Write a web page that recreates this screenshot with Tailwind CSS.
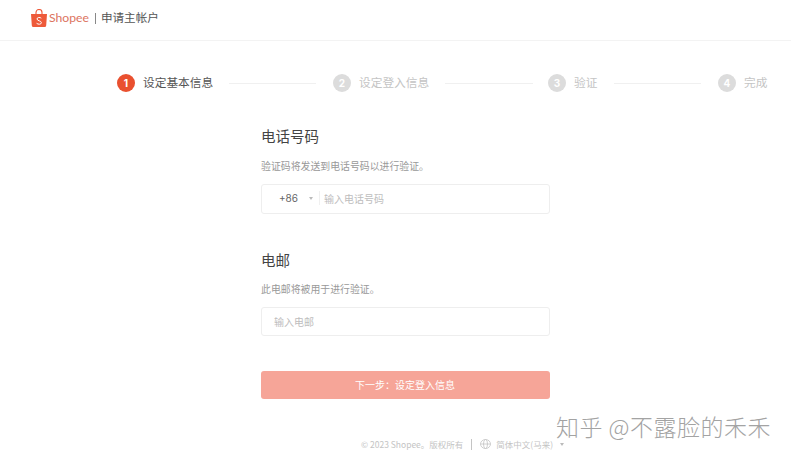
<!DOCTYPE html>
<html lang="zh-CN">
<head>
  <meta charset="UTF-8" />
  <title>Shopee 申请主帐户</title>
  <script src="https://cdn.jsdelivr.net/npm/@tailwindcss/browser@4"></script>
</head>
<body class="bg-white font-['Noto_Sans_CJK_SC','Noto_Sans',sans-serif] overflow-hidden">
  <div class="relative w-[791px] h-[461px] overflow-hidden">

    <!-- Header -->
    <header class="h-[41px] border-b border-[#f3f3f3] flex items-center pl-[31px] pb-[4px]">
      <svg class="w-[16px] h-[18px]" viewBox="0 0 16 18">
        <path d="M0 5h16l-.8 11.500q-.1 1.500-1.600 1.500H2.400q-1.500 0-1.600-1.500z" fill="#ee5a3a"/>
        <path d="M5 5V3.500a3 3 0 0 1 6 0V5" fill="none" stroke="#ee5a3a" stroke-width="1.100"/>
        <path d="M10.300 9.200C9.300 8.200 6 8 6 10c0 2 4.400 1.600 4.400 3.700 0 1.900-3.400 1.900-4.800.6" fill="none" stroke="#fff" stroke-width="1"/>
      </svg>
      <span class="ml-[2px] text-[12.200px] leading-none text-[#dc7460] font-['Lato',sans-serif]">Shopee</span>
      <span class="ml-[6px] w-px h-[11px] bg-[#888]"></span>
      <span class="ml-[5px] text-[11.600px] leading-none text-[#555]">申请主帐户</span>
    </header>

    <!-- Stepper -->
    <div class="h-[18px] mt-[33px] ml-[117px] w-[674px] flex items-center text-[11.700px] leading-none text-[#c4c4c4] whitespace-nowrap">
      <span class="shrink-0 w-[18px] h-[18px] rounded-full bg-[#e9502f] text-white text-[10px] font-bold flex items-center justify-center font-['Inter',sans-serif]">1</span>
      <span class="shrink-0 w-[70px] ml-[8px] pb-[2px] text-[#555]">设定基本信息</span>
      <span class="shrink-0 ml-[16px] w-[87px] h-px bg-[#f0f0f0]"></span>
      <span class="shrink-0 ml-[17px] w-[18px] h-[18px] rounded-full bg-[#dcdcdc] text-white text-[10px] font-bold flex items-center justify-center font-['Inter',sans-serif]">2</span>
      <span class="shrink-0 w-[70px] ml-[8px] pb-[2px]">设定登入信息</span>
      <span class="shrink-0 ml-[16px] w-[88px] h-px bg-[#f0f0f0]"></span>
      <span class="shrink-0 ml-[15px] w-[18px] h-[18px] rounded-full bg-[#dcdcdc] text-white text-[10px] font-bold flex items-center justify-center font-['Inter',sans-serif]">3</span>
      <span class="shrink-0 w-[24px] ml-[8px] pb-[2px]">验证</span>
      <span class="shrink-0 ml-[16px] w-[87px] h-px bg-[#f0f0f0]"></span>
      <span class="shrink-0 ml-[17px] w-[18px] h-[18px] rounded-full bg-[#dcdcdc] text-white text-[10px] font-bold flex items-center justify-center font-['Inter',sans-serif]">4</span>
      <span class="shrink-0 w-[24px] ml-[8px] pb-[2px]">完成</span>
    </div>

    <!-- Form -->
    <main class="ml-[261px] w-[289px] mt-[32px]">
      <h2 class="h-[24px] text-[14.500px] leading-[24px] text-[#444]">电话号码</h2>
      <p class="mt-[11px] h-[14px] text-[9.900px] leading-[14px] text-[#999]">验证码将发送到电话号码以进行验证。</p>
      <div class="mt-[11px] h-[30px] border border-[#eeeeee] rounded-[3px] flex items-center text-[10px] pb-[2px]">
        <span class="ml-[17px] w-[22px] text-[#666] font-['Inter',sans-serif]">+86</span>
        <span class="ml-[8px] w-0 h-0 border-x-[2.500px] border-x-transparent border-t-[3px] border-t-[#bbb]"></span>
        <span class="ml-[6px] w-px h-[14px] bg-[#f0f0f0]"></span>
        <span class="ml-[4px] text-[#bdbdbd]">输入电话号码</span>
      </div>

      <h2 class="mt-[34px] h-[24px] text-[14.500px] leading-[24px] text-[#444]">电邮</h2>
      <p class="mt-[10px] h-[14px] text-[9.900px] leading-[14px] text-[#999]">此电邮将被用于进行验证。</p>
      <div class="mt-[11px] h-[29px] border border-[#eeeeee] rounded-[3px] flex items-center text-[10px] pl-[12px] text-[#bdbdbd]">输入电邮</div>

      <button class="mt-[35px] w-full h-[28px] rounded-[3px] bg-[#f6a598] text-white text-[10px] flex items-center justify-center pb-[2px] pr-[1px]">下一步：设定登入信息</button>
    </main>

    <!-- Footer -->
    <footer class="mt-[38px] ml-[361px] flex items-center h-[14px] text-[8.500px] leading-none text-[#c4c4c4]">
      <span>© 2023 Shopee。版权所有</span>
      <span class="ml-[8px] w-px h-[11px] bg-[#c4c4c4]"></span>
      <svg class="ml-[8px] w-[11px] h-[10px]" viewBox="0 0 11 10" fill="none" stroke="#c4c4c4" stroke-width=".8">
        <ellipse cx="5.500" cy="5" rx="5" ry="4.500"/><ellipse cx="5.500" cy="5" rx="2" ry="4.500"/><path d="M.5 5h10"/>
      </svg>
      <span class="ml-[5px]">简体中文(马来)</span>
      <span class="ml-[7px] w-0 h-0 border-x-[2.500px] border-x-transparent border-t-[3px] border-t-[#bbb]"></span>
    </footer>

    <!-- Watermark -->
    <div class="absolute left-[556px] top-[411px] text-[23px] leading-[30px] font-light text-[#a3a3a3] tracking-[0.500px] whitespace-nowrap">知乎 @不露脸的禾禾</div>
  </div>
</body>
</html>
